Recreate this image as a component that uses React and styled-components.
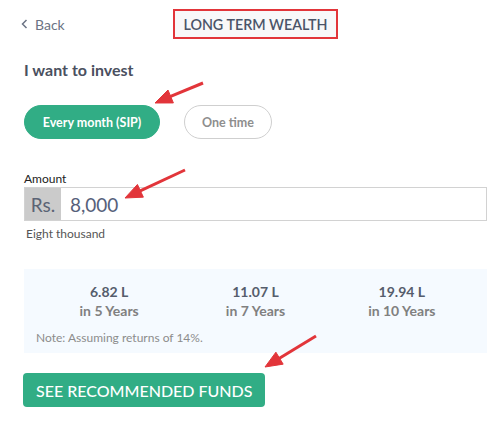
import React from "react";
import styled, { createGlobalStyle } from "styled-components";

const GlobalStyle = createGlobalStyle`
  body {
    margin: 0;
    background: #fff;
    font-family: Lato, "Open Sans", sans-serif;
  }
`;

const Page = styled.div`
  position: relative;
  width: 504px;
  height: 435px;
  padding: 9px 17px 0 24px;
  box-sizing: border-box;
`;

const Header = styled.div`
  display: grid;
  grid-template-columns: 1fr auto 1fr;
  align-items: center;
  height: 30px;
`;

const BackLink = styled.div`
  display: flex;
  align-items: center;
  gap: 6px;
  margin-left: -4px;
  font-size: 14px;
  color: #6b7384;
`;

const Title = styled.div`
  padding: 0 8px;
  height: 30px;
  box-sizing: border-box;
  display: flex;
  align-items: center;
  border: 2.5px solid #e2353a;
  background: #f8f8f9;
  font-size: 14.3px;
  font-weight: 600;
  color: #4a5468;
`;

const Heading = styled.h2`
  margin: 21px 0 0;
  font-size: 16px;
  line-height: 20px;
  font-weight: 700;
  color: #4a5060;
`;

const Toggle = styled.div`
  display: flex;
  gap: 24px;
  margin-top: 25px;
`;

const Pill = styled.button`
  width: ${(p) => (p.$active ? 136 : 88)}px;
  height: 34px;
  padding: 0;
  border-radius: 17px;
  font-family: inherit;
  font-size: 12.5px;
  font-weight: 700;
  border: 1px solid ${(p) => (p.$active ? "#31ad85" : "#cfcfcf")};
  background: ${(p) => (p.$active ? "#31ad85" : "#fff")};
  color: ${(p) => (p.$active ? "#fff" : "#8e8e8e")};
`;

const Label = styled.div`
  margin-top: 32px;
  font-size: 12px;
  line-height: 16px;
  color: #222;
`;

const InputBox = styled.div`
  display: flex;
  height: 34px;
  border: 1px solid #d2d2d2;
  box-sizing: border-box;
`;

const Prefix = styled.div`
  width: 36px;
  display: flex;
  align-items: center;
  justify-content: center;
  background: #cbcbcb;
  font-size: 19px;
  color: #5b6475;
`;

const Value = styled.div`
  display: flex;
  align-items: center;
  padding-left: 9px;
  font-size: 19px;
  color: #56617a;
`;

const Words = styled.div`
  margin: 5px 0 0 2px;
  font-size: 12px;
  line-height: 16px;
  color: #555;
`;

const Stats = styled.div`
  margin-top: 27px;
  height: 84px;
  padding: 14px 12px 0;
  box-sizing: border-box;
  background: #f5faff;
`;

const StatRow = styled.div`
  display: grid;
  grid-template-columns: repeat(3, 1fr);
  text-align: center;
`;

const Amount = styled.div`
  font-size: 14px;
  line-height: 18px;
  font-weight: 700;
  color: #555d6c;
`;

const Period = styled.div`
  font-size: 14px;
  line-height: 20px;
  font-weight: 700;
  color: #808080;
`;

const Note = styled.div`
  margin-top: 9px;
  font-size: 12px;
  color: #8c8c8c;
`;

const Cta = styled.button`
  margin: 20px 0 0 -1px;
  height: 34px;
  padding: 0 13px;
  border: none;
  border-radius: 4px;
  background: #31ad85;
  color: #fff;
  font-family: inherit;
  font-size: 16px;
  font-weight: 500;
`;

const Overlay = styled.svg`
  position: absolute;
  left: 0;
  top: 0;
  pointer-events: none;
`;

function Arrow({ from, to }) {
  const dx = to[0] - from[0];
  const dy = to[1] - from[1];
  const len = Math.hypot(dx, dy);
  const ux = dx / len;
  const uy = dy / len;
  const head = 17;
  const half = 7;
  const bx = to[0] - ux * head;
  const by = to[1] - uy * head;
  const pts = [
    `${to[0]},${to[1]}`,
    `${bx - uy * half},${by + ux * half}`,
    `${bx + uy * half},${by - ux * half}`,
  ].join(" ");
  return (
    <g fill="#e2353a" stroke="#e2353a">
      <line x1={from[0]} y1={from[1]} x2={bx + ux * 2} y2={by + uy * 2} strokeWidth="3" />
      <polygon points={pts} strokeWidth="1" />
    </g>
  );
}

const stats = [
  { value: "6.82 L", years: 5 },
  { value: "11.07 L", years: 7 },
  { value: "19.94 L", years: 10 },
];

export default function App() {
  return (
    <Page>
      <GlobalStyle />
      <Header>
        <BackLink>
          <svg width="9" height="10" viewBox="0 0 9 10">
            <path d="M6.5 1 L2.5 5 L6.5 9" fill="none" stroke="#6b7384" strokeWidth="1.5" />
          </svg>
          Back
        </BackLink>
        <Title>LONG TERM WEALTH</Title>
        <div />
      </Header>

      <Heading>I want to invest</Heading>

      <Toggle>
        <Pill $active>Every month (SIP)</Pill>
        <Pill>One time</Pill>
      </Toggle>

      <Label>Amount</Label>
      <InputBox>
        <Prefix>Rs.</Prefix>
        <Value>8,000</Value>
      </InputBox>
      <Words>Eight thousand</Words>

      <Stats>
        <StatRow>
          {stats.map((s) => (
            <div key={s.years}>
              <Amount>{s.value}</Amount>
              <Period>in {s.years} Years</Period>
            </div>
          ))}
        </StatRow>
        <Note>Note: Assuming returns of 14%.</Note>
      </Stats>

      <Cta>SEE RECOMMENDED FUNDS</Cta>

      <Overlay width="504" height="435">
        <Arrow from={[203, 83]} to={[155, 103]} />
        <Arrow from={[185, 170]} to={[125, 198]} />
        <Arrow from={[316, 336]} to={[265, 367]} />
      </Overlay>
    </Page>
  );
}
